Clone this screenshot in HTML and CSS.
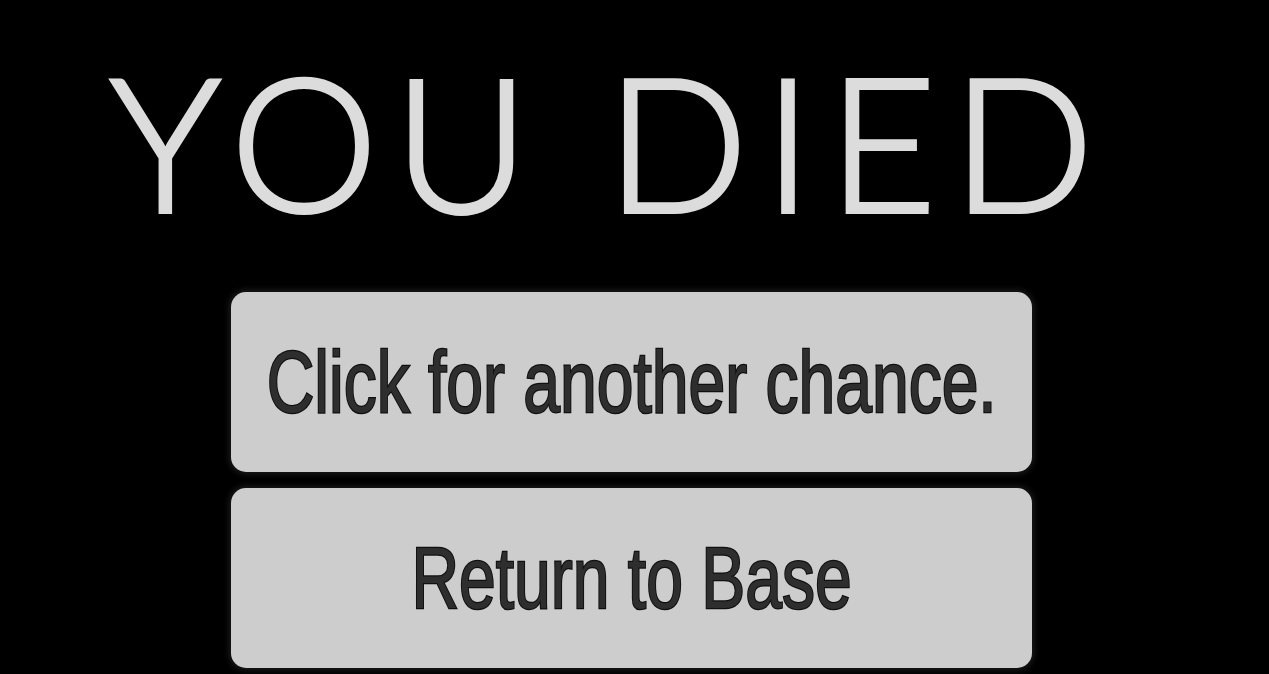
FILE: index.html
```html
<html>
<head>
    <title>You Died</title>
    <link rel="stylesheet" href="styles.css">
</head>
<body>
    <div class="screen">
        <!-- Title -->
        <h1 class="title">YOU DIED</h1>

        <!-- Options -->
        <div class="options">
            <button class="option" onclick="retry()"><span>Click for another chance.</span></button>
            <button class="option" onclick="goHome()"><span>Return to Base</span></button>
        </div>
    </div>
    <script>
        function retry() {
            window.location.reload();
        }

        function goHome() {
            window.location.href = "base.html";
        }
    </script>
</body>
</html>
```

FILE: styles.css
```css
body {
    margin: 0;
    background-color: #000;
    height: 100vh;
    overflow: hidden;
}

.screen {
    display: flex;
    flex-direction: column;
    padding-left: 231px;
}

.title {
    margin: 47px 0 0 -121px;
    font-family: Lato, "Open Sans", sans-serif;
    font-weight: 300;
    font-size: 186px;
    line-height: 186px;
    letter-spacing: 16px;
    word-spacing: -5px;
    color: #dcdcdc;
    -webkit-text-stroke: 4px #dcdcdc;
    white-space: nowrap;
}

.options {
    display: flex;
    flex-direction: column;
    gap: 16px;
    margin-top: 59px;
}

.option {
    width: 801px;
    height: 180px;
    padding: 0;
    border: none;
    border-radius: 15px;
    background-color: #cdcdcd;
    box-shadow: 0 0 6px 2px #1c1c1c;
    display: flex;
    justify-content: center;
    align-items: center;
    cursor: pointer;
}

.option span {
    display: inline-block;
    font-family: "Liberation Sans", Arial, sans-serif;
    font-size: 88px;
    white-space: nowrap;
    color: #2e2e2e;
    -webkit-text-stroke: 2.5px #101010;
    paint-order: stroke fill;
    transform: scaleX(0.75);
}
```
